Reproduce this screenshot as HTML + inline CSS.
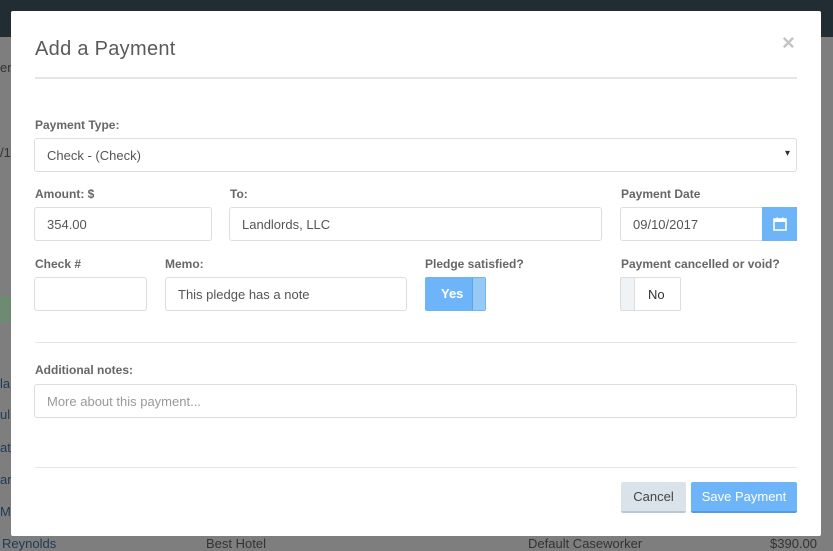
<!DOCTYPE html>
<html><head><meta charset="utf-8"><style>
*{box-sizing:border-box;margin:0;padding:0}
body{width:833px;height:549px;overflow:hidden;position:relative;background:#7e7e7e;font-family:"Liberation Sans",sans-serif;color:#555}
.top{position:absolute;left:0;top:0;width:833px;height:37px;background:#222c33}
.bgt{position:absolute;font-size:13px;color:#1f3a55}
.modal{position:absolute;left:11px;top:11px;width:810px;height:525px;background:#fff;border-radius:2px}
.abs{position:absolute}
h1{position:absolute;left:24px;top:27px;font-weight:normal;font-size:20px;color:#5a5a5a;letter-spacing:.3px}
.close{position:absolute;left:771px;top:19px;font-size:22px;color:#c4c4c4;font-weight:bold}
.hr{position:absolute;left:24px;width:762px;height:2px;background:#e5e5e5}
.lbl{position:absolute;font-size:12px;font-weight:bold;color:#666}
.inp{position:absolute;border:1px solid #ddd;border-radius:3px;height:34px;font-size:13px;color:#555;padding:9px 12px;background:#fff}
</style></head><body>
<div class="top"></div>
<div class="bgt" style="left:0;top:60px;color:#333">ers</div>
<div class="bgt" style="left:0;top:145px;color:#333">/1</div>
<div class="abs" style="left:0;top:296px;width:11px;height:26px;background:#6e8a70"></div>
<div class="bgt" style="left:0;top:376px">lar</div>
<div class="bgt" style="left:0;top:407px">ul</div>
<div class="bgt" style="left:0;top:440px">ats</div>
<div class="bgt" style="left:0;top:472px">ar</div>
<div class="bgt" style="left:0;top:504px">Mo</div>
<div class="bgt" style="left:2px;top:536px">Reynolds</div>
<div class="bgt" style="left:206px;top:536px;color:#333">Best Hotel</div>
<div class="bgt" style="left:528px;top:536px;color:#333">Default Caseworker</div>
<div class="bgt" style="left:770px;top:536px;color:#333">$390.00</div>
<div class="modal">
<h1>Add a Payment</h1>
<div class="close">×</div>
<div class="hr" style="top:66px"></div>
<div class="lbl" style="left:24px;top:107px">Payment Type:</div>
<div class="inp" style="left:23px;top:127px;width:763px">Check - (Check)<span style="position:absolute;right:6px;top:9px;font-size:10px;color:#333">▾</span></div>
<div class="lbl" style="left:24px;top:176px">Amount: $</div>
<div class="inp" style="left:23px;top:196px;width:178px">354.00</div>
<div class="lbl" style="left:219px;top:176px">To:</div>
<div class="inp" style="left:218px;top:196px;width:373px">Landlords, LLC</div>
<div class="lbl" style="left:610px;top:176px">Payment Date</div>
<div class="inp" style="left:609px;top:196px;width:143px;border-radius:3px 0 0 3px">09/10/2017</div>
<div class="abs" style="left:751px;top:196px;width:35px;height:34px;background:#6db5f8;display:flex;align-items:center;justify-content:center"><svg width="14" height="14" viewBox="0 0 14 14"><rect x="1" y="2" width="12" height="11" fill="none" stroke="#fff" stroke-width="1.6"/><rect x="1" y="2" width="12" height="3" fill="#fff"/><rect x="3.5" y="0.5" width="1.5" height="3" fill="#fff"/><rect x="9" y="0.5" width="1.5" height="3" fill="#fff"/></svg></div>
<div class="lbl" style="left:24px;top:246px">Check #</div>
<div class="inp" style="left:23px;top:266px;width:113px"></div>
<div class="lbl" style="left:154px;top:246px">Memo:</div>
<div class="inp" style="left:154px;top:266px;width:242px">This pledge has a note</div>
<div class="lbl" style="left:414px;top:246px">Pledge satisfied?</div>
<div class="abs" style="left:414px;top:266px;width:61px;height:34px;background:#6db5f8;border-radius:2px;color:#fff;font-size:13px;font-weight:bold"><span style="position:absolute;left:16px;top:9px">Yes</span><div style="position:absolute;left:47px;top:1px;width:13px;height:32px;background:#97c9f6;border-left:1px solid #5aa4e8"></div></div>
<div class="lbl" style="left:610px;top:246px">Payment cancelled or void?</div>
<div class="abs" style="left:609px;top:266px;width:61px;height:34px;border:1px solid #ddd;border-radius:2px;font-size:13px;color:#333"><div style="position:absolute;left:0;top:0;width:14px;height:32px;background:#f0f3f6;border-right:1px solid #ddd"></div><span style="position:absolute;left:27px;top:9px">No</span></div>
<div class="hr" style="top:331px;height:1px"></div>
<div class="lbl" style="left:24px;top:352px">Additional notes:</div>
<div class="inp" style="left:23px;top:373px;width:763px;color:#999">More about this payment...</div>
<div class="hr" style="top:456px;height:1px"></div>
<div class="abs" style="left:610px;top:471px;width:65px;height:31px;background:#dae3ea;border-bottom:2px solid #b9c8d3;border-radius:2px;font-size:13px;color:#444;text-align:center;line-height:29px">Cancel</div>
<div class="abs" style="left:680px;top:471px;width:106px;height:31px;background:#6db5f8;border-bottom:2px solid #4f9de6;border-radius:2px;font-size:13px;color:#fff;text-align:center;line-height:29px">Save Payment</div>
</div>
</body></html>
